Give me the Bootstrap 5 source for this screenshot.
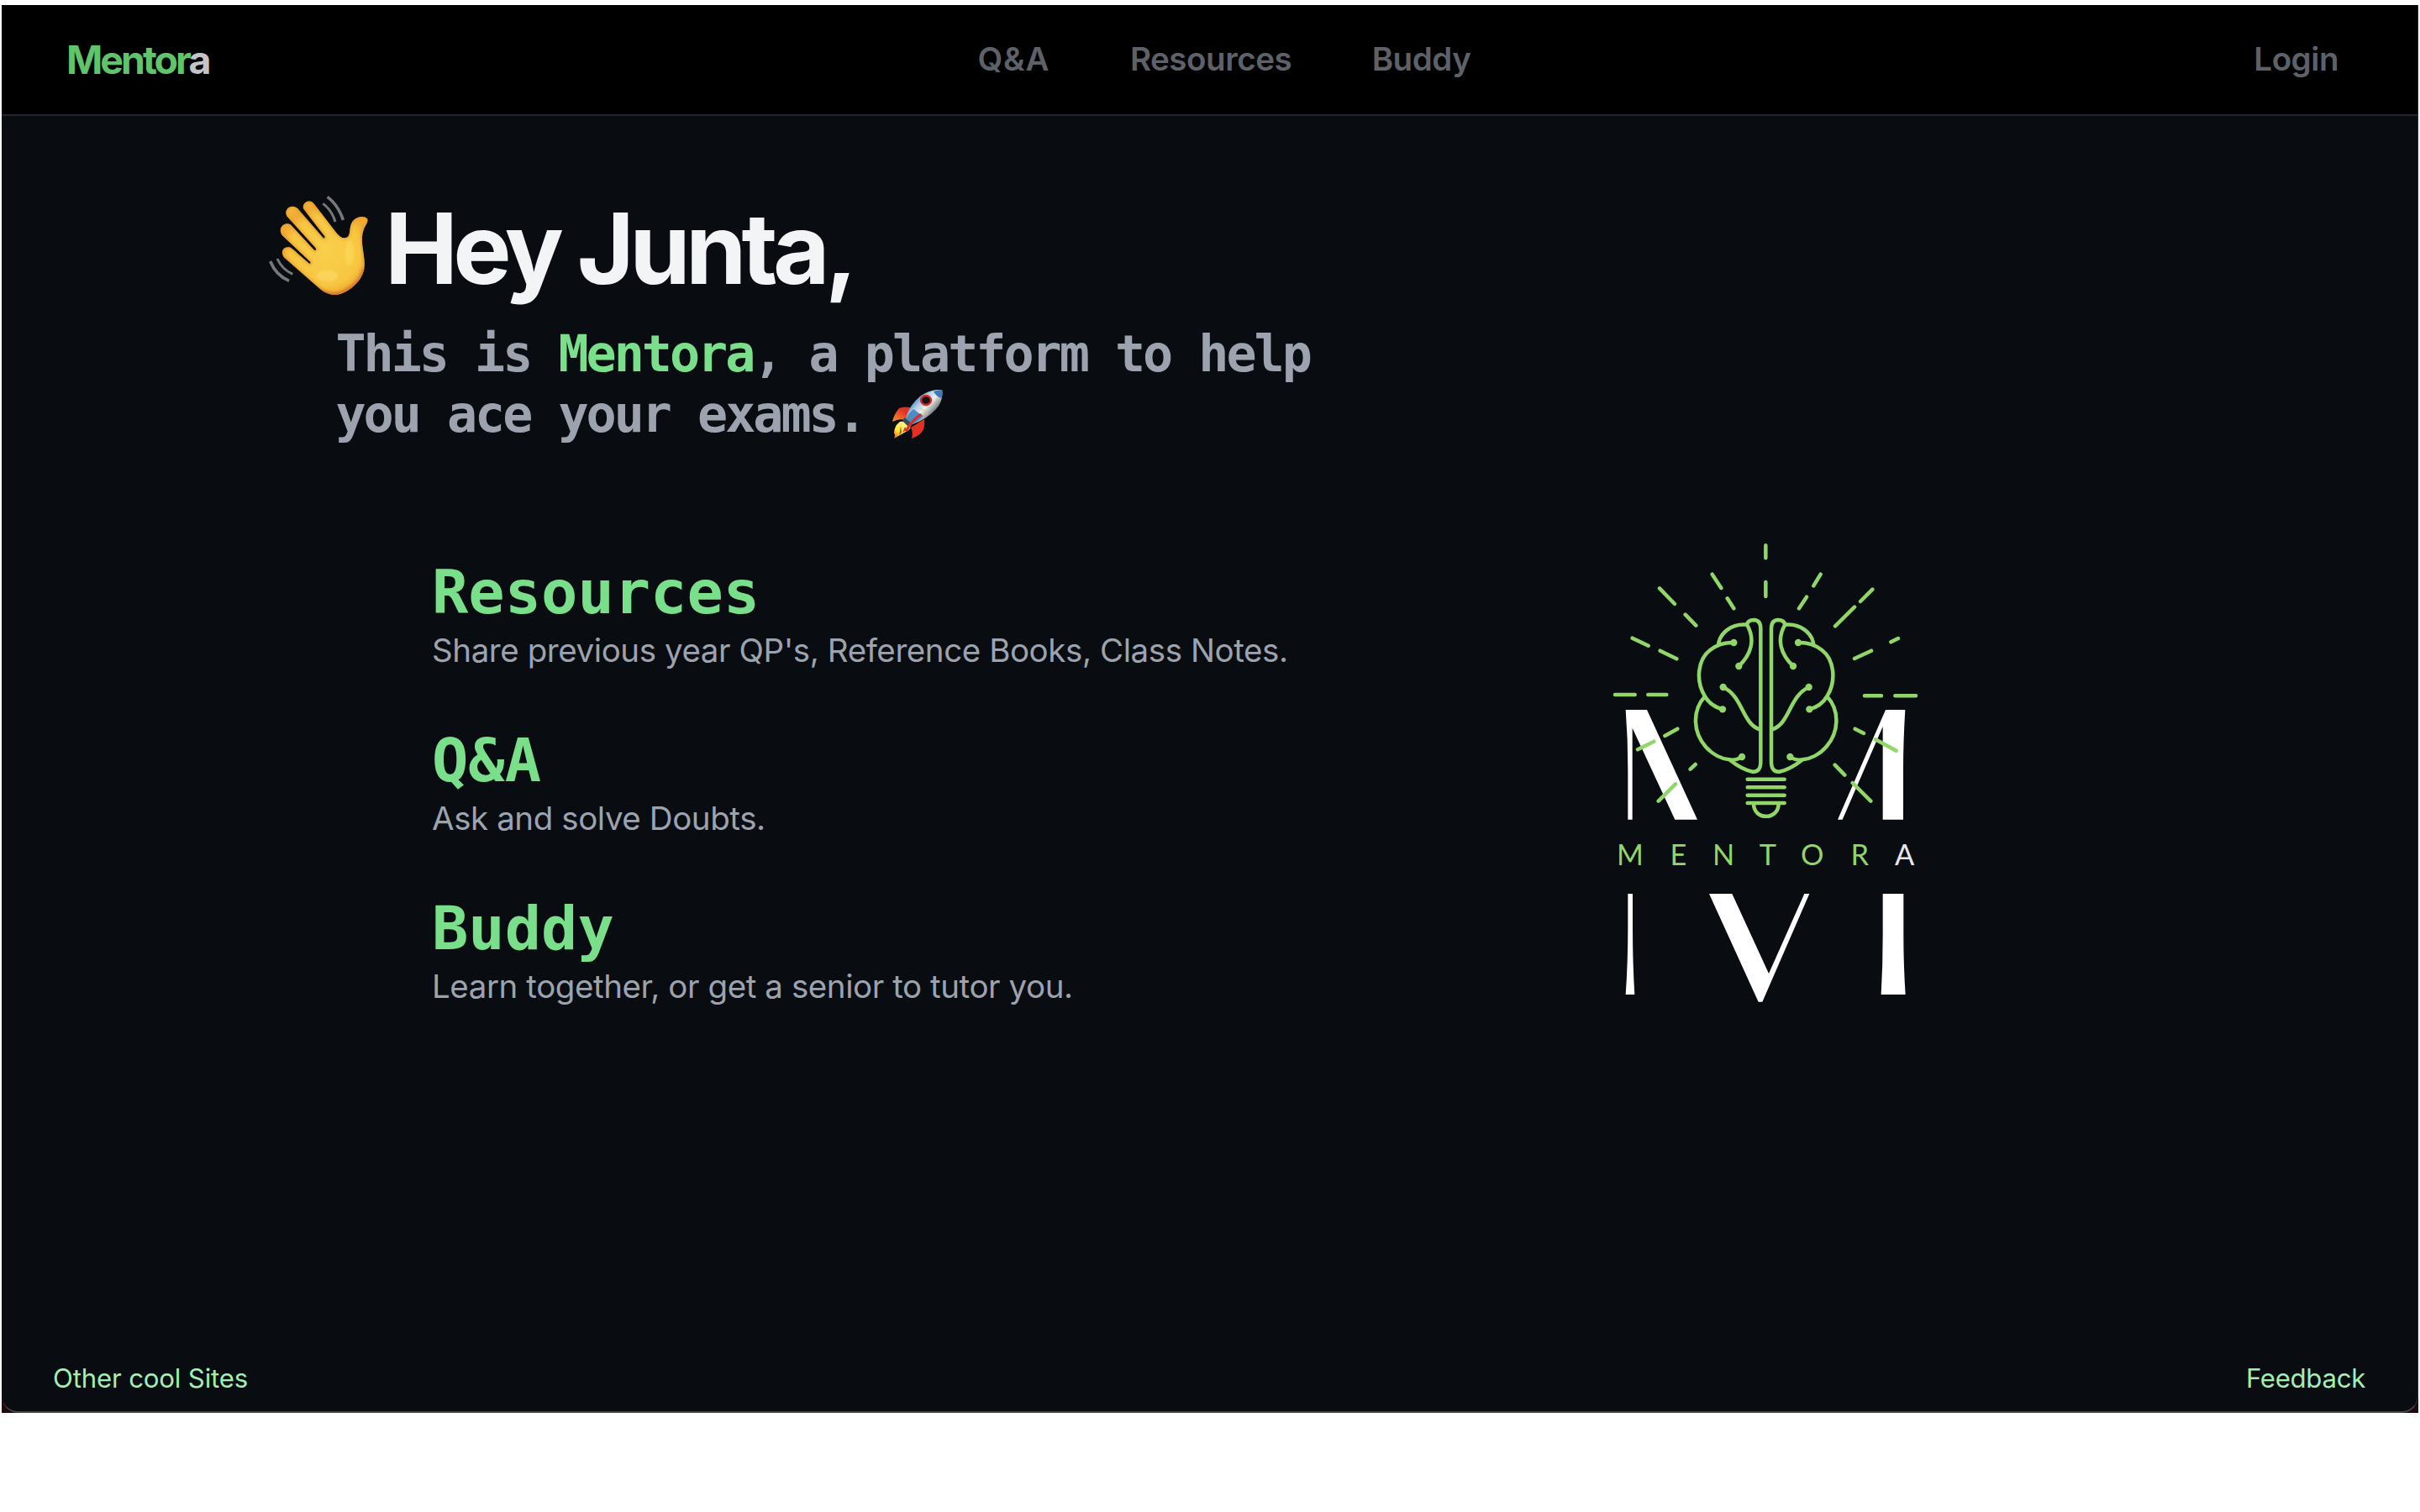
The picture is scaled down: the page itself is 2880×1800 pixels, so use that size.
<!DOCTYPE html>
<html lang="en">
<head>
<meta charset="utf-8">
<meta name="viewport" content="width=device-width, initial-scale=1">
<title>Mentora</title>
<link href="https://cdn.jsdelivr.net/npm/bootstrap@5.3.0/dist/css/bootstrap.min.css" rel="stylesheet">
<style>
  body { background: #fff; font-family: Inter, "Liberation Sans", sans-serif; overflow: hidden; }
  .window-frame { margin: 6px 2px 0; height: 1676px; background: #22080c; overflow: hidden; }
  .window-page { background: #090c11; border-bottom: 2px solid #46474b; border-right: 1px solid #2c2e33; border-radius: 0 0 20px 20px; }
  .top-bar { height: 132px; background: #000; border-bottom: 2px solid #1f2735; padding: 0 94px 0 77px; }
  .brand-name { width: 1084.4px; font-size: 46.5px; font-weight: 700; letter-spacing: -3px; line-height: 56px; color: #5fc46a; }
  .brand-name span { color: #c4c4c8; }
  .top-link { font-size: 38.5px; font-weight: 600; line-height: 48px; letter-spacing: -.45px; color: #5f6169; padding-bottom: 2px; }
  .top-links { gap: 95.5px; }
  .top-link.wide-text { letter-spacing: .9px; }
  .hero { padding: 82px 0 0 298px; }
  .hero h1 { margin: 16px 0 0 8px; font-size: 116.5px; font-weight: 700; letter-spacing: -5.8px; line-height: 120px; color: #f3f4f6; }
  .mono { font-family: "DejaVu Sans Mono", monospace; font-weight: 700; }
  .tagline { margin: 15px 0 0 397.5px; width: 1200px; font-size: 60px; line-height: 72px; letter-spacing: -3px; color: #9ca3af; }
  .tagline svg { vertical-align: -8px; }
  .accent { color: #7adf8b; }
  .showcase { padding-left: 512px; margin-top: 101px; }
  .feature-list { width: 1386px; padding-top: 39px; gap: 67px; }
  .feature-list h2 { margin: 0 0 5px; font-size: 72px; line-height: 72px; }
  .feature-list p { font-size: 38.5px; line-height: 56px; letter-spacing: -.42px; color: #9ca3af; }
  .bottom-bar { padding: 0 62px 19px 61px; font-size: 31.2px; line-height: 40px; letter-spacing: -.17px; }
  .bottom-bar a { color: #a1efb0; }
  .bottom-bar .tight-text { letter-spacing: -.3px; }
</style>
</head>
<body>
<div class="window-frame">
<div class="window-page h-100 d-flex flex-column">

  <nav class="top-bar d-flex align-items-center flex-shrink-0">
    <a class="brand-name text-decoration-none" href="#">Mentor<span>a</span></a>
    <div class="top-links d-flex">
      <a class="top-link wide-text text-decoration-none" href="#">Q&amp;A</a>
      <a class="top-link text-decoration-none" href="#">Resources</a>
      <a class="top-link text-decoration-none" href="#">Buddy</a>
    </div>
    <a class="top-link ms-auto text-decoration-none" href="#">Login</a>
  </nav>

  <main>
    <header class="hero d-flex align-items-start">
      <svg width="150" height="150" viewBox="0 0 450 450" role="img" aria-label="Waving hand">
        <defs>
          <radialGradient id="skin" gradientUnits="userSpaceOnUse" cx="262" cy="235" r="200">
            <stop offset="0" stop-color="#f9cf4c"/><stop offset=".62" stop-color="#f8c640"/><stop offset=".8" stop-color="#f0aa35"/><stop offset="1" stop-color="#f5b93a"/>
          </radialGradient>
          <filter id="soften" x="-20%" y="-20%" width="140%" height="140%"><feGaussianBlur stdDeviation="5"/></filter>
          <clipPath id="handClip"><path id="handShape" d="M183 85C178 62 207 48 222 69L300 170C313 187 326 194 340 187C354 178 344 147 360 129C375 111 401 110 411 121C417 132 405 143 400 156C390 181 392 204 395 226C399 257 406 285 397 312C385 351 338 388 305 392C283 395 259 386 242 371L116 261C98 242 112 220 131 223C143 225 151 235 161 244L204 281Q211 283 208 275L107 180C91 158 112 130 137 142L222 233Q231 237 227 226L124 112C111 84 144 66 163 85L254 190Q262 193 259 184Z"/></clipPath>
        </defs>
        <g fill="none" stroke="#77787a" stroke-width="11">
          <path d="M269 43Q309 74 325 126"/><path stroke-width="9" d="M253 67Q285 91 297 132"/>
          <path d="M65 273Q84 322 132 343"/><path stroke-width="9" d="M90 264Q107 302 145 319"/>
        </g>
        <use href="#handShape" fill="url(#skin)"/>
        <g clip-path="url(#handClip)">
          <use href="#handShape" fill="none" stroke="#e1932b" stroke-width="9" opacity=".75" filter="url(#soften)"/>
          <path d="M232 372Q275 402 325 383Q390 350 400 300" fill="none" stroke="#cf702c" stroke-width="14" opacity=".7" filter="url(#soften)"/>
          <ellipse cx="268" cy="325" rx="38" ry="20" fill="#fbdc6c" opacity=".6" filter="url(#soften)"/>
          <ellipse cx="347" cy="243" rx="17" ry="44" fill="#fbda5c" opacity=".65" filter="url(#soften)"/>
        </g>
      </svg>
      <h1 class="text-nowrap">Hey Junta,</h1>
    </header>

    <p class="tagline mono mb-0">This is <span class="accent">Mentora</span>, a platform to help<br>you ace your exams. <svg width="60" height="58" viewBox="0 0 60 58" role="img" aria-label="Rocket">
      <defs>
        <linearGradient id="hull" gradientUnits="userSpaceOnUse" x1="25" y1="10" x2="48" y2="31">
          <stop offset="0" stop-color="#3f77a8"/><stop offset=".3" stop-color="#a9cdea"/><stop offset=".58" stop-color="#eef0ec"/><stop offset="1" stop-color="#5b6368"/>
        </linearGradient>
        <linearGradient id="fire" gradientUnits="userSpaceOnUse" x1="18" y1="40" x2="2" y2="58">
          <stop offset="0" stop-color="#fff7a0"/><stop offset=".6" stop-color="#ffe23a"/><stop offset="1" stop-color="#e65a12"/>
        </linearGradient>
        <linearGradient id="fin" x1="1" y1="0" x2="0" y2="1">
          <stop offset=".35" stop-color="#e23124"/><stop offset="1" stop-color="#f39a2c"/>
        </linearGradient>
      </defs>
      <path fill="url(#fin)" d="M8 22Q15 19 24 22L15 36Q8 34 0 38Q2 29 8 22Z"/>
      <path fill="#e23124" d="M38 35Q39 44 36 49Q32 55 23 58Q25 50 22 45Z"/>
      <path fill="url(#fire)" d="M9 38Q14 37 21 42Q23 47 16 50L2 58Q4 53 2 52Q2 43 9 38Z"/>
      <path fill="#b35a17" d="M10 43L8 54L11 51ZM15 44L12 51L17 48Z"/>
      <path fill="#3a4b59" d="M15 33L24 42L19 44L12 37Z"/>
      <path fill="url(#hull)" d="M59 0Q61 13 52 23Q41 35 24 41L16 34Q20 18 34 7Q46-1 59 0Z"/>
      <path fill="#3f79ba" d="M59 0Q61 5 58 10Q52 8 49 2Q54 0 59 0Z"/>
      <path fill="#4b8cc4" d="M25 23Q31 28 37 31Q31 38 24 41L16 34Q19 28 25 23Z"/>
      <path fill="none" stroke="#e8c54f" d="M33 22Q39 24 42 30"/>
      <ellipse cx="40" cy="12.500" rx="6" ry="5.500" fill="#151519" stroke="#d92b25" stroke-width="2.400"/>
      <path fill="none" stroke="#e02a22" stroke-width="3.200" stroke-linecap="round" d="M33 30Q23 37 17 48"/>
    </svg></p>

    <section class="showcase d-flex">
      <div class="feature-list d-flex flex-column">
        <div><h2 class="mono accent">Resources</h2><p class="mb-0">Share previous year QP's, Reference Books, Class Notes.</p></div>
        <div><h2 class="mono accent">Q&amp;A</h2><p class="mb-0">Ask and solve Doubts.</p></div>
        <div><h2 class="mono accent">Buddy</h2><p class="mb-0">Learn together, or get a senior to tutor you.</p></div>
      </div>

      <svg width="400" height="590" viewBox="0 0 1200 1770" role="img" aria-label="Mentora logo">
        <g fill="#fff">
          <path d="M104 645H180L360 1037H280L128 710V1037H112V860Q112 750 104 645Z"/>
          <path d="M1032 645H1102Q1095 760 1095 860V1037H1022V705L878 1037H861Z"/>
          <path d="M112 1302H129V1420Q129 1550 136 1662H104Q112 1550 112 1420Z"/>
          <path d="M402 1302H484L615 1587L742 1302H760L592 1688H578Z"/>
          <path d="M1022 1302H1096V1450Q1096 1560 1103 1662H1016Q1022 1560 1022 1450Z"/>
        </g>
        <g fill="none" stroke="#91d668" stroke-width="13.500" stroke-linecap="round">
          <path d="M604 58V103M604 189V240M413 161L445 210M467 247L490 283M225 211L279 267M317 305L355 344M128 389L185 416M227 434L286 463M66 591H137M184 591H250M800 161L775 202M750 242L723 283M985 215L942 258M921 278L852 346M1077 390L1051 403M981 434L921 462M957 595H1017M1066 595H1140"/>
          <path d="M289 713L244 738M205 758L147 787M353 840L335 857M282 910L221 971M923 713L954 729M996 751L1070 791M851 842L886 878M914 906L979 971"/>
          <g id="lobe">
            <path d="M586 830V355Q586 325 562 324Q540 324 537 341C569 395 551 449 508 489M537 341C480 336 440 372 435 412M490 405C455 404 428 414 406 431C362 464 352 540 387 597C402 622 426 637 450 643M387 597C339 650 346 726 389 776C414 805 448 820 474 823C492 826 506 822 518 813M474 823C502 845 526 861 557 866Q586 868 586 830M452 564C524 598 518 694 584 716"/>
            <g fill="#91d668" stroke="none"><circle cx="490" cy="405" r="12.500"/><circle cx="508" cy="489" r="12.500"/><circle cx="452" cy="564" r="12.500"/><circle cx="450" cy="643" r="12.500"/><circle cx="519" cy="813" r="12.500"/></g>
          </g>
          <use href="#lobe" transform="matrix(-1 0 0 1 1210 0)"/>
          <path d="M539 893H671M539 922H671M539 950H671M539 978H671M561 982C562 1040 648 1040 650 982"/>
        </g>
        <g font-family="Lato, sans-serif" font-size="103" fill="#91d668" text-anchor="middle">
          <text x="120" y="1200">M</text><text x="292" y="1200">E</text><text x="453" y="1200">N</text><text x="612" y="1200">T</text><text x="770" y="1200">O</text><text x="940" y="1200">R</text><text x="1100" y="1200" fill="#e6e7ea">A</text>
        </g>
      </svg>
    </section>
  </main>

  <footer class="bottom-bar mt-auto d-flex justify-content-between">
    <a class="text-decoration-none" href="#">Other cool Sites</a>
    <a class="tight-text text-decoration-none" href="#">Feedback</a>
  </footer>

</div>
</div>
<script src="https://cdn.jsdelivr.net/npm/bootstrap@5.3.0/dist/js/bootstrap.bundle.min.js"></script>
</body>
</html>
